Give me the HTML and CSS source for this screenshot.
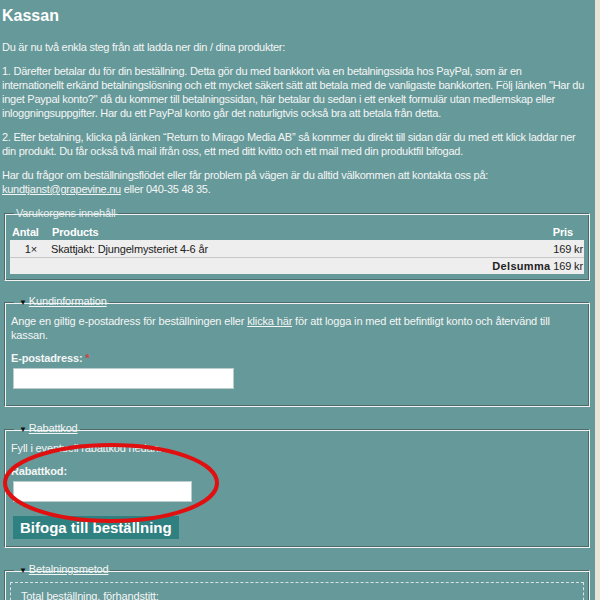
FILE: index.html
```html
<!DOCTYPE html>
<html lang="sv">
<head>
    <meta charset="UTF-8">
    <meta name="viewport" content="width=device-width, initial-scale=1.0">
    <title>Kassan</title>
    <link rel="stylesheet" href="styles.css">
</head>
<body>
    <div class="page">
        <h1>Kassan</h1>
        <div class="intro">
            <p>Du är nu två enkla steg från att ladda ner din / dina produkter:</p>
            <p>1. Därefter betalar du för din beställning. Detta gör du med bankkort via en betalningssida hos PayPal, som är en<br>
            internationellt erkänd betalningslösning och ett mycket säkert sätt att betala med de vanligaste bankkorten. Följ länken "Har du inget Paypal konto?" då du kommer till betalningssidan, här betalar du sedan i ett enkelt formulär utan medlemskap eller inloggningsuppgifter. Har du ett PayPal konto går det naturligtvis också bra att betala från detta.</p>
            <p>2. Efter betalning, klicka på länken “Return to Mirago Media AB” så kommer du direkt till sidan där du med ett klick laddar ner din produkt. Du får också två mail ifrån oss, ett med ditt kvitto och ett mail med din produktfil bifogad.</p>
            <p>Har du frågor om beställningsflödet eller får problem på vägen är du alltid välkommen att kontakta oss på:<br>
            <a href="#">kundtjanst@grapevine.nu</a> eller 040-35 48 35.</p>
        </div>

        <fieldset class="box cart-box">
            <legend>Varukorgens innehåll</legend>
            <table class="cart">
                <tr class="head">
                    <th class="qty">Antal</th>
                    <th class="name">Products</th>
                    <th class="price">Pris</th>
                </tr>
                <tr class="row">
                    <td class="qty">1×</td>
                    <td class="name">Skattjakt: Djungelmysteriet 4-6 år</td>
                    <td class="price">169 kr</td>
                </tr>
                <tr class="row total">
                    <td colspan="3"><b>Delsumma</b> 169 kr</td>
                </tr>
            </table>
        </fieldset>

        <fieldset class="box">
            <legend><span class="arrow">▼</span><a href="#">Kundinformation</a></legend>
            <p class="hint">Ange en giltig e-postadress för beställningen eller <a href="#">klicka här</a> för att logga in med ett befintligt konto och återvänd till kassan.</p>
            <label for="email">E-postadress: <span class="req">*</span></label>
            <input type="text" id="email" class="field wide">
        </fieldset>

        <fieldset class="box">
            <legend><span class="arrow">▼</span><a href="#">Rabattkod</a></legend>
            <p class="hint">Fyll i eventuell rabattkod nedan.</p>
            <label for="coupon">Rabattkod:</label>
            <input type="text" id="coupon" class="field">
            <button type="button" class="attach">Bifoga till beställning</button>
        </fieldset>

        <fieldset class="box pay">
            <legend><span class="arrow">▼</span><a href="#">Betalningsmetod</a></legend>
            <div class="dashed">
                <p class="hint">Total beställning, förhandstitt:</p>
            </div>
        </fieldset>

        <svg class="circle" width="226" height="90" viewBox="0 0 226 90">
            <ellipse cx="111" cy="43" rx="106" ry="38" fill="none" stroke="#e01010" stroke-width="4"/>
        </svg>
    </div>
</body>
</html>
```

FILE: styles.css
```css
body {
    margin: 0;
    background-color: #e8e4d8;
    font-family: "Liberation Sans", Arial, sans-serif;
    font-size: 11px;
    letter-spacing: -0.15px;
    color: #f4f6f6;
    overflow: hidden;
}
.page {
    position: relative;
    width: 590px;
    height: 600px;
    padding: 0 3px 0 2px;
    background-color: #669999;
}
h1 {
    margin: 0;
    padding-top: 6px;
    font-size: 16px;
    line-height: 20px;
    letter-spacing: 0;
    color: #fff;
}
p {
    margin: 0 0 10px;
    line-height: 14px;
}
.intro {
    margin-top: 14px;
    letter-spacing: -0.26px;
}
a {
    color: #f4f6f6;
}
.box {
    margin: 0 2px 14px 2px;
    padding: 0 5px 5px;
    border: 1px solid;
    border-color: #4d6b6b #f2f2f2 #f2f2f2 #4d6b6b;
    box-shadow: inset 1px 1px 0 #f2f2f2, inset -1px -1px 0 #4d6b6b;
    min-width: 0;
}
.cart-box {
    padding-bottom: 6px;
    margin-bottom: 13px;
}
legend {
    padding: 0 2px;
    margin-left: 4px;
    line-height: 14px;
    color: #e6eeee;
}
.arrow {
    color: #111;
    font-size: 8px;
    margin: 0 2px 0 3px;
}
.cart {
    width: 100%;
    border-collapse: collapse;
    margin-top: 4px;
}
.cart th {
    font-weight: bold;
    text-align: left;
    padding: 0 2px;
    height: 16px;
    color: #fff;
}
.cart .qty {
    width: 36px;
}
.cart td.qty {
    text-align: right;
    padding-right: 13px;
    width: 24px;
}
.cart .price {
    text-align: right;
    width: 60px;
}
.cart th.price {
    padding-right: 11px;
}
.row td {
    background-color: #eeeeee;
    color: #222;
    height: 17px;
    padding: 0 1px;
    border-bottom: 1px solid #c8c8c8;
}
.row.total td {
    text-align: right;
    border-bottom: none;
    height: 16px;
}
.total b {
    letter-spacing: 0.3px;
}
.hint {
    margin: 4px 6px 9px 1px;
}
label {
    display: block;
    font-weight: bold;
    line-height: 14px;
    margin-left: 1px;
}
.req {
    color: #c44;
}
.field {
    display: block;
    width: 179px;
    height: 21px;
    box-sizing: border-box;
    margin: 3px 0 0 3px;
    border: 1px solid #bcc;
    background-color: #fff;
}
.field.wide {
    width: 221px;
    margin-bottom: 12px;
}
.attach {
    display: block;
    margin: 14px 0 3px 3px;
    padding: 0 7px;
    height: 23px;
    border: none;
    background-color: #2f8080;
    color: #fff;
    font-family: "Liberation Sans", Arial, sans-serif;
    font-size: 15px;
    font-weight: bold;
    letter-spacing: 0;
}
.pay {
    padding-top: 4px;
}
.dashed {
    border: 1px dashed #d8e4e4;
    padding: 4px 10px;
    height: 40px;
}
.dashed .hint {
    margin: 2px 0;
}
.circle {
    position: absolute;
    left: 0;
    top: 440px;
}
```
